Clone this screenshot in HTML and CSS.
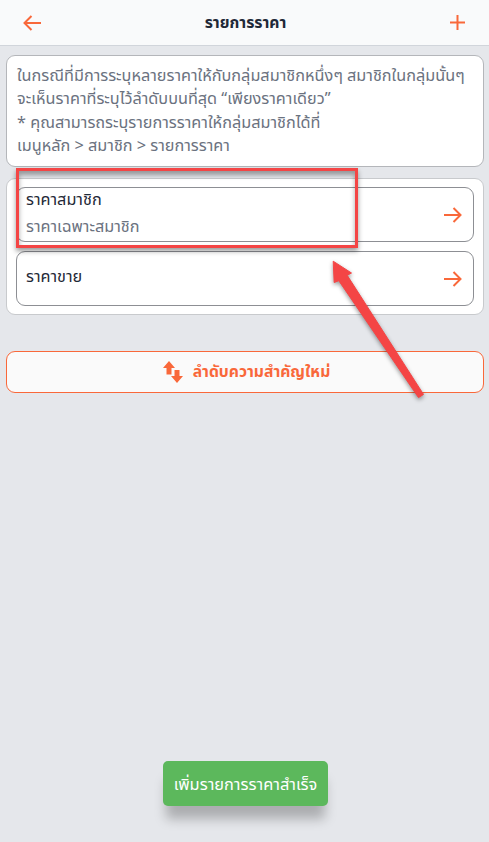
FILE: index.html
```html
<!DOCTYPE html>
<html lang="th">
<head>
    <meta charset="UTF-8">
    <meta name="viewport" content="width=device-width, initial-scale=1.0">
    <title>รายการราคา</title>
    <link rel="stylesheet" href="styles.css">
</head>
<body>
    <header class="top-bar">
        <button class="icon-btn">
            <svg width="18" height="16" viewBox="0 0 18 16"><path d="M18 8H1.500M8.500 1L1.500 8l7 7"/></svg>
        </button>
        <h1>รายการราคา</h1>
        <button class="icon-btn">
            <svg width="15" height="15" viewBox="0 0 15 15"><path d="M7.500 0v15M0 7.500h15"/></svg>
        </button>
    </header>

    <main class="content">
        <div class="note-card">
            <p>ในกรณีที่มีการระบุหลายราคาให้กับกลุ่มสมาชิกหนึ่งๆ สมาชิกในกลุ่มนั้นๆ</p>
            <p>จะเห็นราคาที่ระบุไว้ลำดับบนที่สุด “เพียงราคาเดียว”</p>
            <p>* คุณสามารถระบุรายการราคาให้กลุ่มสมาชิกได้ที่</p>
            <p>เมนูหลัก &gt; สมาชิก &gt; รายการราคา</p>
        </div>

        <div class="list-card">
            <div class="price-row">
                <div class="price-text">
                    <div class="price-title">ราคาสมาชิก</div>
                    <div class="price-sub">ราคาเฉพาะสมาชิก</div>
                </div>
                <svg class="arrow" width="18" height="16" viewBox="0 0 18 16"><path d="M0 8h16.500M9.500 1l7 7-7 7"/></svg>
            </div>
            <div class="price-row">
                <div class="price-text">
                    <div class="price-title">ราคาขาย</div>
                </div>
                <svg class="arrow" width="18" height="16" viewBox="0 0 18 16"><path d="M0 8h16.500M9.500 1l7 7-7 7"/></svg>
            </div>
        </div>

        <button class="reorder-btn">
            <svg width="20" height="22" viewBox="0 0 20 22"><path d="M6 0l6 7H8.500v6.500h-5V7H0zM14 22l-6-7h3.500V9h5v6H20z"/></svg>
            <span>ลำดับความสำคัญใหม่</span>
        </button>
    </main>

    <div class="toast">เพิ่มรายการราคาสำเร็จ</div>

    <!-- annotation drawn over the screenshot -->
    <div class="mark-box"></div>
    <svg class="mark-arrow" width="110" height="160" viewBox="0 0 110 160">
        <path d="M5.200 4.200L23.500 16L19.200 18.300L95.500 137.400L90.500 140.600L10.800 23.700L6.200 25.500z" class="mark-head"/>
    </svg>
</body>
</html>
```

FILE: styles.css
```css
* {
    margin: 0;
    padding: 0;
    box-sizing: border-box;
    font-family: 'Noto Sans', 'Noto Sans Thai', sans-serif;
}

body {
    position: relative;
    width: 489px;
    height: 842px;
    overflow: hidden;
    background: #e5e7eb;
}

.top-bar {
    display: flex;
    justify-content: space-between;
    align-items: center;
    height: 46px;
    padding: 0 24px 0 23px;
    background: #f9fafb;
    border-bottom: 1px solid #d1d5db;
}

.top-bar h1 {
    font-size: 15.750px;
    font-weight: bold;
    color: #1f2937;
}

.icon-btn {
    display: flex;
    border: none;
    background: none;
}

.icon-btn svg path,
.arrow path {
    fill: none;
    stroke: #f9683a;
    stroke-width: 2;
}

.content {
    display: flex;
    flex-direction: column;
    padding: 9px 5px 0 6px;
}

.note-card {
    height: 112px;
    padding: 8px 10px;
    background: white;
    border: 1px solid #b4b6ba;
    border-radius: 9px;
    font-size: 16.250px;
    line-height: 23.300px;
    color: #6b7280;
}

.list-card {
    display: flex;
    flex-direction: column;
    gap: 9px;
    margin-top: 11px;
    padding: 8px 9px;
    background: white;
    border: 1px solid #c8cacd;
    border-radius: 9px;
}

.price-row {
    display: flex;
    justify-content: space-between;
    align-items: center;
    height: 55px;
    padding: 0 11px 0 9px;
    border: 1px solid #8d8f94;
    border-radius: 9px;
}

.price-text {
    padding-bottom: 5px;
}

.price-title {
    font-size: 16.250px;
    line-height: 22px;
    color: #1f2937;
}

.price-sub {
    margin-top: 5px;
    font-size: 16.250px;
    line-height: 22px;
    color: #6b7280;
}

.reorder-btn {
    display: flex;
    justify-content: center;
    align-items: center;
    gap: 10px;
    height: 42px;
    margin-top: 36px;
    padding-left: 3px;
    background: #fafafa;
    border: 1px solid #f9683a;
    border-radius: 9px;
    font-size: 15.700px;
    font-weight: bold;
    color: #f9683a;
}

.reorder-btn svg {
    fill: #f9683a;
}

.toast {
    position: absolute;
    top: 761px;
    left: 163px;
    width: 165px;
    height: 45px;
    background: #5cb85c;
    border-radius: 5px;
    box-shadow: 0 16px 12px -3px rgba(0, 0, 0, 0.25);
    font-size: 16.400px;
    line-height: 45px;
    text-align: center;
    color: white;
}

.mark-box {
    position: absolute;
    top: 168px;
    left: 16px;
    width: 342px;
    height: 80px;
    border: 3px solid #f44545;
    box-shadow: 0 3px 5px rgba(0, 0, 0, 0.4), inset 0 4px 5px rgba(0, 0, 0, 0.35);
}

.mark-arrow {
    position: absolute;
    top: 257px;
    left: 328px;
    overflow: visible;
    filter: drop-shadow(0 2px 2px rgba(0, 0, 0, 0.4));
}

.mark-head {
    fill: #f44545;
    stroke: #f44545;
    stroke-width: 1;
    stroke-linejoin: round;
}
```
